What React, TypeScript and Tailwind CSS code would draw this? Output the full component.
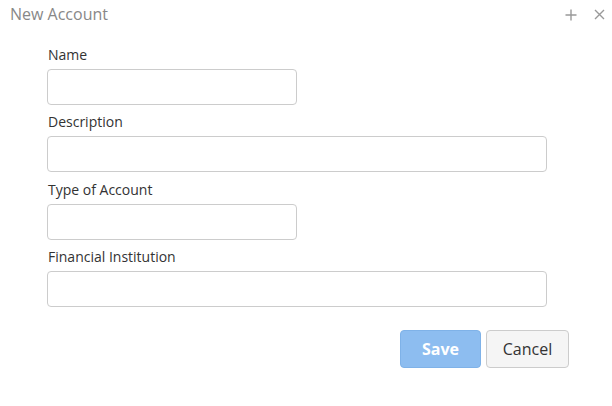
export default function App() {
  const font = { fontFamily: '"Open Sans", "Noto Sans", sans-serif' };
  return (
    <div className="w-[612px] h-[406px] bg-white relative" style={font}>
      <div className="flex items-center justify-between h-[28px] pl-[10px] pr-[7px]">
        <div className="text-[16px] text-[#888888] leading-none">New Account</div>
        <div className="flex items-center gap-[17px] text-[#999999]">
          <svg width="12" height="12" viewBox="0 0 12 12" className="mt-[1px]">
            <path d="M6 0.5v11M0.5 6h11" stroke="#999" strokeWidth="1.4" />
          </svg>
          <svg width="11" height="11" viewBox="0 0 11 11">
            <path d="M1 1l9 9M10 1l-9 9" stroke="#999" strokeWidth="1.4" />
          </svg>
        </div>
      </div>
      <div className="pl-[47px] pt-[17px] flex flex-col">
        <label className="text-[14px] text-[#333333] leading-[20px] pl-[1px]">Name</label>
        <input className="mt-[4px] w-[250px] h-[36px] border border-[#cccccc] rounded-[4px] outline-none" />
        <label className="mt-[7px] text-[14px] text-[#333333] leading-[20px] pl-[1px]">Description</label>
        <input className="mt-[4px] w-[500px] h-[36px] border border-[#cccccc] rounded-[4px] outline-none" />
        <label className="mt-[8px] text-[14px] text-[#333333] leading-[20px] pl-[1px]">Type of Account</label>
        <input className="mt-[4px] w-[250px] h-[36px] border border-[#cccccc] rounded-[4px] outline-none" />
        <label className="mt-[7px] text-[14px] text-[#333333] leading-[20px] pl-[1px]">Financial Institution</label>
        <input className="mt-[4px] w-[500px] h-[36px] border border-[#cccccc] rounded-[4px] outline-none" />
      </div>
      <div className="flex justify-end gap-[5px] pr-[43px] mt-[23px]">
        <button className="w-[81px] h-[38px] rounded-[4px] bg-[#8dbdf0] border border-[#7fb2e8] text-white font-bold text-[16px]">Save</button>
        <button className="w-[83px] h-[38px] rounded-[4px] bg-[#f5f5f5] border border-[#cccccc] text-[#333333] text-[16px]">Cancel</button>
      </div>
    </div>
  );
}
